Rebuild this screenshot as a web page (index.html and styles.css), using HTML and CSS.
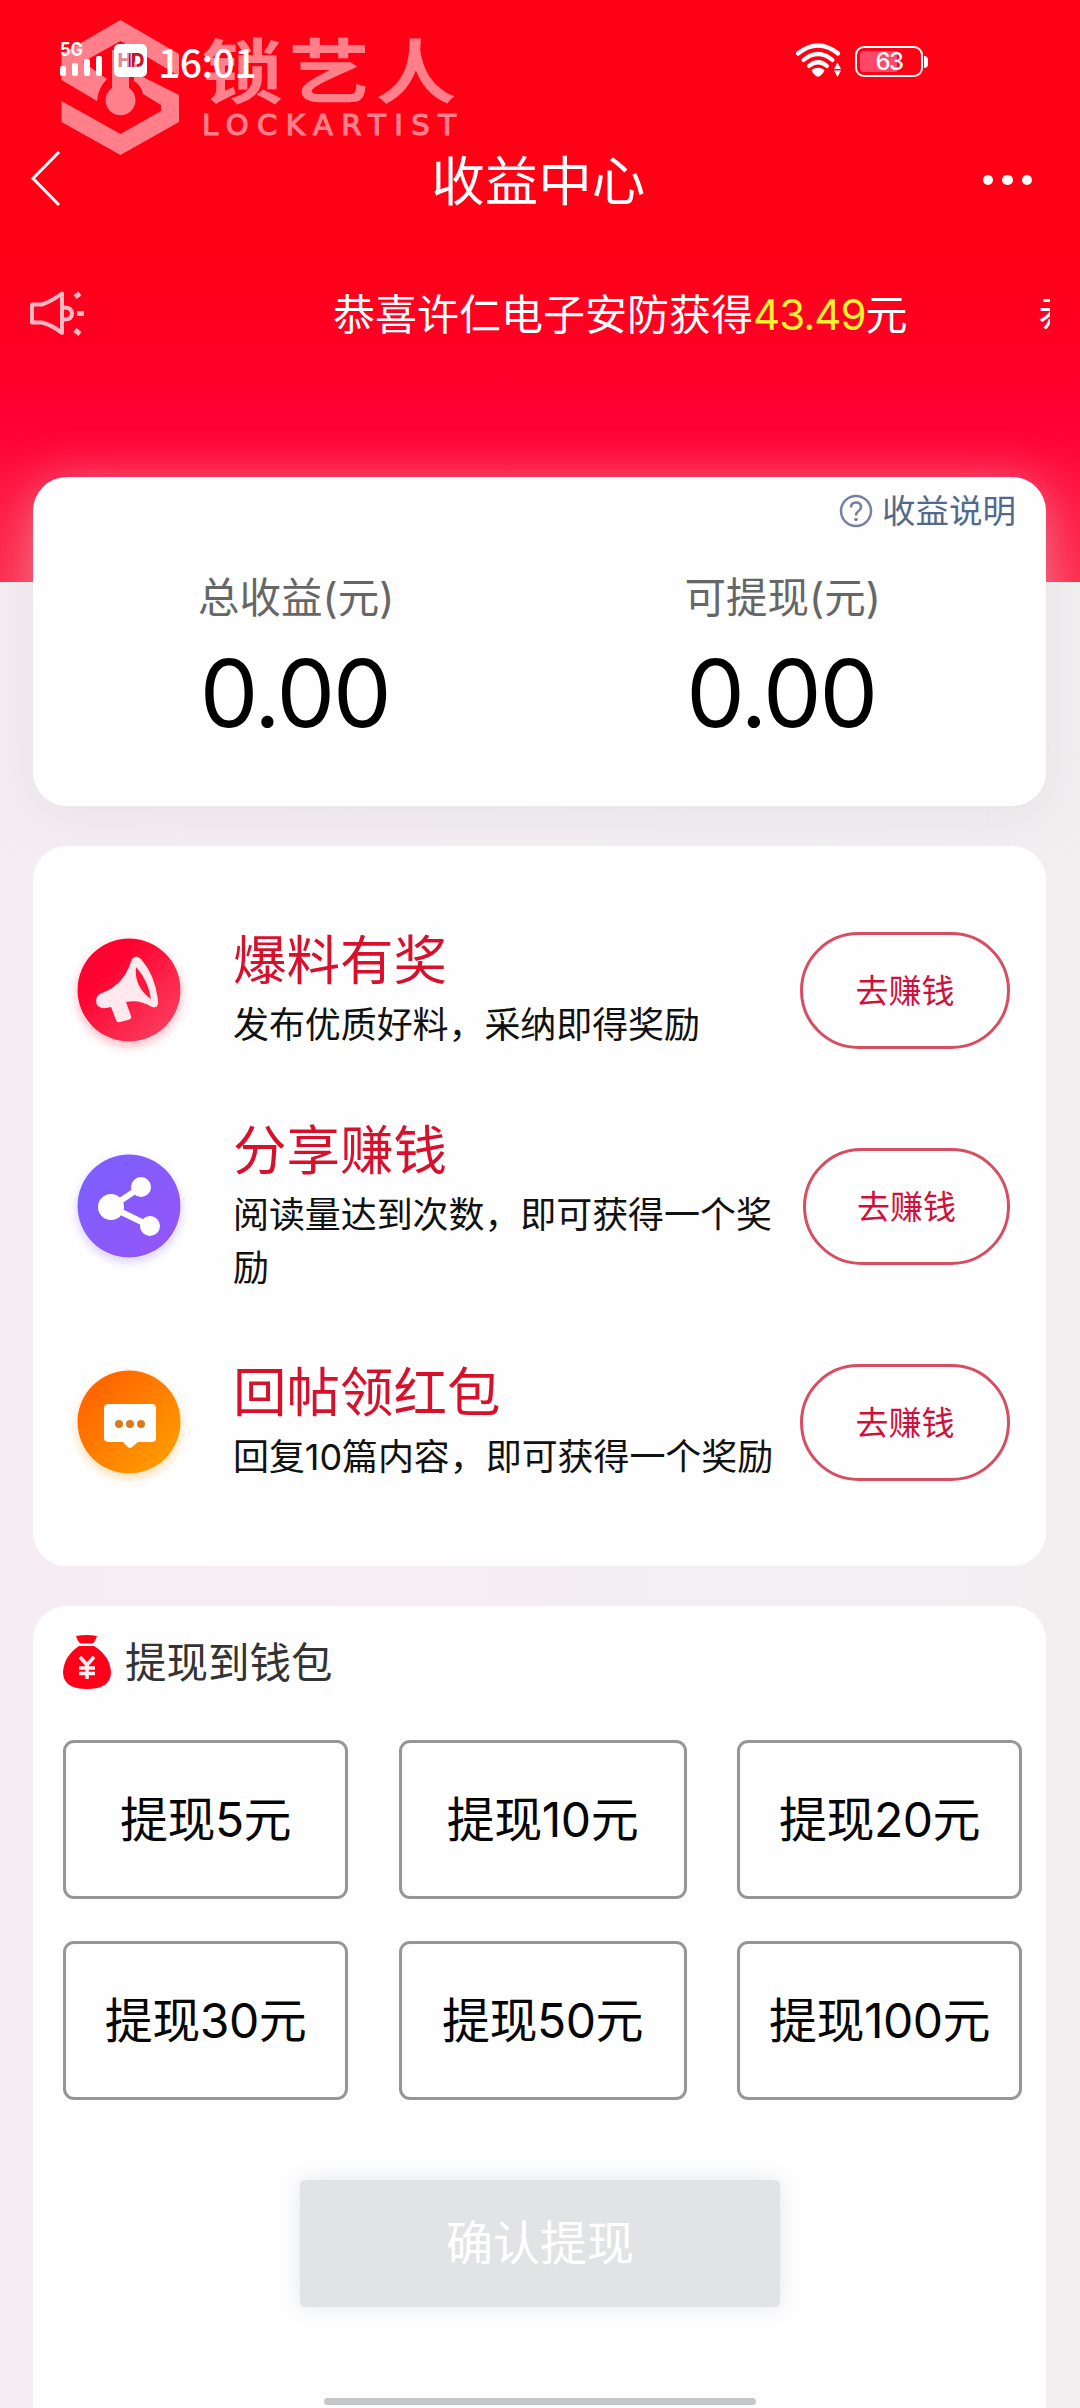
FILE: index.html
```html
<!DOCTYPE html>
<html lang="zh-CN">
<head>
<meta charset="utf-8">
<title>收益中心</title>
<link rel="stylesheet" href="styles.css">
</head>
<body>
<div class="page">
  <header class="hero">
    <div class="status">
      <svg class="status-signal" width="46" height="40" viewBox="0 0 46 40">
        <text class="signal-label" x="0" y="16.500" textLength="23" lengthAdjust="spacingAndGlyphs">5G</text>
        <g fill="#fff"><rect x="0" y="27" width="6" height="10" rx="2"/><rect x="12" y="24" width="6" height="13" rx="2"/><rect x="24" y="20" width="6" height="17" rx="2"/><rect x="36" y="17" width="6" height="20" rx="2"/></g>
      </svg>
      <span class="status-hd">HD</span>
      <span class="status-time">16:01</span>
      <svg class="status-wifi" width="48" height="36" viewBox="0 0 48 36">
        <g fill="none" stroke="#fff" stroke-width="4.2" stroke-linecap="round"><path d="M3 10.500Q23 -5.500 43 10.500"/><path d="M8.500 17Q23 5 37.500 17"/><path d="M14 23Q23 15.500 32 23"/></g>
        <path d="M16.500 27Q23 22.500 29.500 27Q29 30 25 33Q23 34.500 21 33Q17 30 16.500 27Z" fill="#fff"/>
        <path d="M42.500 19.500L46 26H39ZM42.500 34L46 27.500H39Z" fill="#fff"/>
      </svg>
      <span class="battery"><span class="battery-level">63</span></span>
    </div>
    <nav class="nav">
      <svg width="40" height="60" viewBox="0 0 40 60"><path d="M33 2L7 28.500L33 55" fill="none" stroke="#fff" stroke-width="3"/></svg>
      <h1 class="nav-title">收益中心</h1>
      <span class="more"><i></i><i></i><i></i></span>
    </nav>
    <div class="notice">
      <svg class="notice-icon" width="60" height="46" viewBox="0 0 60 46" fill="none" stroke="#ffb9c2" stroke-width="4">
        <path d="M4 14.500H14Q24 11 34 3.500V43Q24 35 14 32.500H4Z" stroke-linejoin="round"/>
        <path d="M36 17.500Q44 17.500 44 23.500Q44 29.500 36 29.500"/>
        <path d="M47 7L52 3.500M49 23.500H56M47 40L52 44" stroke-width="5"/>
      </svg>
      <div class="ticker"><span class="ticker-item">恭喜许仁电子安防获得<b>43.49</b>元</span><span class="ticker-item ticker-next">恭喜</span></div>
    </div>
    <svg class="brand" width="420" height="140" viewBox="55 18 420 140" fill="#fff">
      <path d="M61.500 54L120.500 20L179 54V76L120.500 41L83 62L107 79Q98 88 97 101L61.500 80Z"/>
      <path d="M112 50H129V88A15 15 0 1 1 112 88Z"/>
      <path d="M137 62V74L179 95V122L120.500 155L61.500 122V101L120.500 134L161 111V105L143 94Q141 85 134 81V62Z"/>
      <g class="brand-name" transform="translate(202 98) scale(1.15 1)"><text x="0" y="0" textLength="221">锁艺人</text></g>
      <text class="brand-latin" x="202" y="135" textLength="254">LOCKARTIST</text>
    </svg>
  </header>

  <main class="content">
    <section class="card summary">
      <a class="help"><svg width="34" height="34" viewBox="0 0 34 34"><circle cx="17" cy="17" r="15" fill="none" stroke="#7580a5" stroke-width="2.500"/><path d="M12 13.500Q12 8.500 17 8.500Q22 8.500 22 13Q22 15.500 19 17.500Q17 19 17 21.500" fill="none" stroke="#7580a5" stroke-width="2.500"/><circle cx="17" cy="25.500" r="1.800" fill="#7580a5"/></svg>收益说明</a>
      <div class="totals">
        <div class="total"><span class="total-label">总收益(元)</span><span class="total-value">0.00</span></div>
        <div class="total"><span class="total-label">可提现(元)</span><span class="total-value">0.00</span></div>
      </div>
    </section>

    <section class="card tasks">
      <div class="task">
        <svg class="task-icon icon-red" viewBox="0 0 104 104">
          <defs><linearGradient id="gr" x1="0" y1="0" x2="1" y2="1"><stop offset=".3" stop-color="#fe0330"/><stop offset="1" stop-color="#fb4866"/></linearGradient></defs>
          <circle cx="52" cy="52" r="51.500" fill="url(#gr)"/>
          <path d="M55 21Q59 16 64 21Q78 37 81 62Q82 71 75 69Q62 61 49 64L54 78Q55 81 51 82L43 84Q40 85 39 82L34 69Q24 72 20 67Q17 58 25 55Q44 48 52 29Z" fill="#ffe9ec"/>
          <path d="M59 29Q71 42 74 61Q57 49 59 29Z" fill="#fb1740"/>
        </svg>
        <div class="task-text"><h2>爆料有奖</h2><p>发布优质好料，采纳即得奖励</p></div>
        <button class="go">去赚钱</button>
      </div>
      <div class="task">
        <svg class="task-icon icon-purple" viewBox="0 0 104 104">
          <defs><linearGradient id="gp" x1="0" y1="0" x2="1" y2="1"><stop offset="0" stop-color="#7a60ff"/><stop offset="1" stop-color="#9555f8"/></linearGradient></defs>
          <circle cx="52" cy="52" r="51.500" fill="url(#gp)"/>
          <path d="M64 33L34 53L73 72" fill="none" stroke="#fff" stroke-width="6"/>
          <circle cx="64" cy="33" r="10" fill="#fff"/><circle cx="34" cy="53" r="13" fill="#fff"/><circle cx="73" cy="72" r="10" fill="#fff"/>
        </svg>
        <div class="task-text"><h2>分享赚钱</h2><p>阅读量达到次数，即可获得一个奖励</p></div>
        <button class="go go-narrow">去赚钱</button>
      </div>
      <div class="task">
        <svg class="task-icon icon-orange" viewBox="0 0 104 104">
          <defs><linearGradient id="go" x1="0" y1="0" x2="1" y2="1"><stop offset="0" stop-color="#ff5a00"/><stop offset="1" stop-color="#ffa400"/></linearGradient></defs>
          <circle cx="52" cy="52" r="51.500" fill="url(#go)"/>
          <path d="M32 34H75Q79 34 79 38V68Q79 72 75 72H61L55 77Q53 79 51 77L46 72H32Q27 72 27 68V38Q27 34 32 34Z" fill="#fff"/>
          <g fill="#dd7a1c"><circle cx="42" cy="54" r="4"/><circle cx="53" cy="54" r="4"/><circle cx="64" cy="54" r="4"/></g>
        </svg>
        <div class="task-text"><h2>回帖领红包</h2><p>回复10篇内容，即可获得一个奖励</p></div>
        <button class="go">去赚钱</button>
      </div>
    </section>

    <section class="card withdraw">
      <h3 class="withdraw-title">
        <svg width="48" height="54" viewBox="0 0 48 54"><path d="M13 1Q24 -1 34 1Q33 5 30 8.500H17Q14 5 13 1ZM16 11H31Q47 21 48 37Q48 54 24 54Q0 54 0 37Q1 21 16 11Z" fill="#ff0019"/><path d="M17 22L24 30L31 22M24 30V44M16 33H32M16 38.500H32" fill="none" stroke="#ffeef0" stroke-width="3.600"/></svg>
        <span>提现到钱包</span>
      </h3>
      <div class="amounts">
        <button>提现5元</button><button>提现10元</button><button>提现20元</button>
        <button>提现30元</button><button>提现50元</button><button>提现100元</button>
      </div>
      <button class="confirm">确认提现</button>
      <div class="home-bar"></div>
    </section>
  </main>
</div>
</body>
</html>
```
FILE: styles.css
```css
* { box-sizing: border-box; }
body { margin: 0; font-family: Inter, "Noto Sans CJK SC", sans-serif; background: #f5eef2; }
h1, h2, h3, p { margin: 0; font-weight: 400; }
button { margin: 0; padding: 0; background: none; font: inherit; color: inherit; }
svg { display: block; flex: none; }
.page { width: 1080px; height: 2408px; overflow: hidden; background: linear-gradient(90deg, #f6edf3, #f2eff1); }

.hero { position: relative; height: 582px; background: linear-gradient(#ff0015 0, #ff0015 250px, #ff0033 420px, #ff0f3d 470px, #ff2a4c 100%); color: #fff; }
.status { display: flex; align-items: flex-start; height: 150px; padding: 39px 157px 0 60px; }
.status-signal { overflow: visible; }
.signal-label { font: 700 19px Inter, sans-serif; fill: #fff; }
.status-hd { width: 33px; height: 33px; margin: 5px 0 0 8px; border-radius: 5px; background: #fff; color: #c4122c; font: 800 19px/33px Inter, sans-serif; text-align: center; letter-spacing: -1px; }
.status-time { margin: -3px 0 0 11px; font: 500 39px/50px "Noto Sans CJK SC", sans-serif; letter-spacing: -.5px; }
.status-wifi { margin: 4px 12px 0 auto; }
.battery { position: relative; width: 68px; height: 31px; margin-top: 7px; border: 2px solid #fff; border-radius: 9px; padding: 3px; }
.battery::after { content: ""; position: absolute; left: 67px; top: 8px; width: 4px; height: 12px; border-radius: 0 4px 4px 0; background: #fff; }
.battery-level { display: block; height: 21px; border-radius: 4px; background: linear-gradient(90deg, #ff4868 63%, transparent 63%); font: 500 24px/21px Inter, sans-serif; text-align: center; letter-spacing: -1.5px; }
.nav { display: flex; align-items: center; justify-content: space-between; height: 60px; padding: 0 48px 0 26px; }
.nav-title { margin: 3px 0 0 28px; font-size: 53.500px; line-height: 60px; }
.more { display: flex; gap: 9px; }
.more i { width: 10.500px; height: 10.500px; border-radius: 50%; background: #fff; }
.notice { display: flex; align-items: flex-start; height: 60px; margin: 80px 30px 0 28px; }
.notice-icon { clip-path: inset(0); }
.ticker { display: flex; width: 962px; overflow: hidden; padding-left: 245px; font-size: 42px; line-height: 50px; white-space: nowrap; }
.ticker-item { flex: none; }
.ticker-item b { font-weight: 400; letter-spacing: -1px; color: #f8f32c; }
.ticker-next { margin-left: 131px; }
.brand { position: absolute; left: 55px; top: 18px; opacity: .5; }
.brand-name { font: 700 70px "Noto Sans CJK SC", sans-serif; }
.brand-latin { font: 500 29px "DejaVu Sans", sans-serif; stroke: #fff; stroke-width: 1.2px; }

.content { position: relative; display: flex; flex-direction: column; gap: 40px; margin-top: -105px; padding: 0 34px 0 33px; }
.card { background: #fefefe; border-radius: 34px; }
.summary { height: 329px; padding: 8px 20px; box-shadow: 0 8px 50px rgba(215, 215, 218, .5); }
.help { display: flex; justify-content: flex-end; align-items: center; gap: 9px; margin-right: 10px; font-size: 33.500px; line-height: 52px; color: #53698a; }
.totals { display: grid; grid-template-columns: 1fr 1fr; }
.total { display: flex; flex-direction: column; align-items: center; }
.total-label { margin-top: 34px; font-size: 41.500px; line-height: 54px; color: #666; }
.total-value { margin-top: 11px; font-size: 93px; line-height: 114px; letter-spacing: -2px; text-indent: -3px; color: #000; }

.tasks { height: 720px; padding: 36px 36px 0 44px; }
.task { display: flex; align-items: center; height: 216px; }
.task-icon { width: 104px; height: 104px; overflow: visible; border-radius: 50%; }
.icon-red { box-shadow: 0 4px 10px #ffb8c3; }
.icon-purple { box-shadow: 0 4px 10px #dccfff; }
.icon-orange { box-shadow: 0 4px 10px #ffdcb0; }
.task-text { flex: none; width: 545px; margin: -4px 0 0 52px; }
.task-text h2 { font-size: 53.500px; line-height: 76px; color: #d7102c; }
.task-text p { font-size: 36px; line-height: 53.500px; letter-spacing: -.08px; color: #111; }
.go { width: 210px; height: 117px; margin-left: auto; padding-bottom: 2px; border: 3px solid #d74d62; border-radius: 59px; font-size: 33px; color: #d0103a; }
.go-narrow { width: 207px; }

.withdraw { height: 803px; padding: 26px 24px 0 30px; border-radius: 34px 34px 0 0; }
.withdraw-title { display: flex; align-items: center; gap: 14px; height: 60px; font-size: 41.500px; color: #333; }
.withdraw-title span { margin-top: -5px; }
.amounts { display: grid; grid-template-columns: 285px 288px 285px; grid-auto-rows: 159px; justify-content: space-between; row-gap: 42px; margin-top: 48px; }
.amounts button { padding-bottom: 8px; border: 3px solid #969696; border-radius: 11px; font-size: 48px; letter-spacing: -.5px; color: #060606; }
.confirm { display: block; width: 480px; height: 127px; margin: 80px 0 0 237px; padding-bottom: 8px; border: 0; border-radius: 5px; background: #e2e3e4; box-shadow: 0 0 24px #e8e9ef; font-size: 47px; color: #fff; }
.home-bar { width: 432px; height: 7px; margin: 91px 0 0 261px; border-radius: 4px; background: #c5c6c8; }
```
